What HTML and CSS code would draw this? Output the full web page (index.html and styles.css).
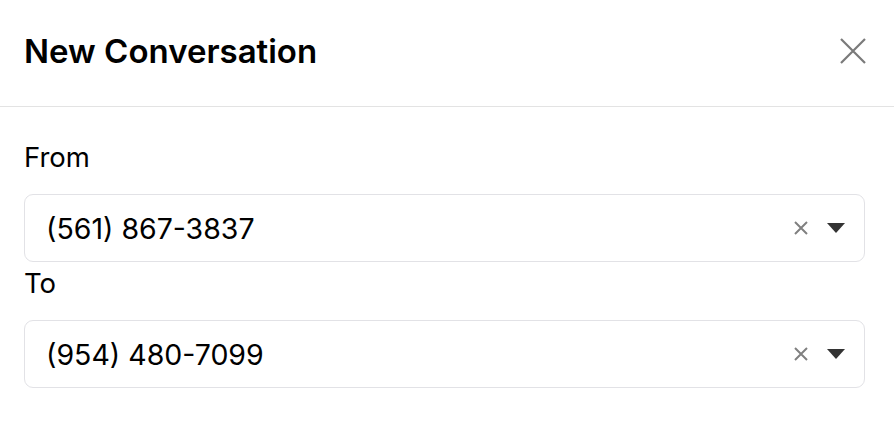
FILE: index.html
```html
<!DOCTYPE html>
<html>
<head>
<meta charset="utf-8">
<link rel="stylesheet" href="styles.css">
</head>
<body>
<div class="modal">
  <div class="header">
    <h1 class="title">New Conversation</h1>
    <button class="close" aria-label="Close">
      <svg width="26" height="26" viewBox="0 0 26 26"><path d="M1 1L25 25M25 1L1 25" stroke="#7a7a7a" stroke-width="2.2" fill="none"/></svg>
    </button>
  </div>
  <div class="body">
    <div class="field">
      <label class="label">From</label>
      <div class="select">
        <span class="value">(561) 867-3837</span>
        <span class="controls">
          <svg class="clear" width="14" height="14" viewBox="0 0 14 14"><path d="M1 1L13 13M13 1L1 13" stroke="#808080" stroke-width="2" fill="none"/></svg>
          <svg class="caret" width="18" height="10" viewBox="0 0 18 10"><path d="M0 0H18L9 10Z" fill="#333"/></svg>
        </span>
      </div>
    </div>
    <div class="field">
      <label class="label">To</label>
      <div class="select">
        <span class="value">(954) 480-7099</span>
        <span class="controls">
          <svg class="clear" width="14" height="14" viewBox="0 0 14 14"><path d="M1 1L13 13M13 1L1 13" stroke="#808080" stroke-width="2" fill="none"/></svg>
          <svg class="caret" width="18" height="10" viewBox="0 0 18 10"><path d="M0 0H18L9 10Z" fill="#333"/></svg>
        </span>
      </div>
    </div>
  </div>
</div>
</body>
</html>
```
FILE: styles.css
```css
* { box-sizing: border-box; }
html, body { margin: 0; padding: 0; background: #fff; }
body { font-family: Inter, "Noto Sans", sans-serif; color: #000; }
.modal { width: 894px; height: 430px; background: #fff; }
.header {
  height: 107px;
  border-bottom: 1px solid #e3e3e3;
  display: flex;
  align-items: center;
  justify-content: space-between;
  padding: 0 28px 4px 24px;
}
.title { margin: 0; font-size: 33px; font-weight: 600; color: #000; }
.close { border: 0; background: none; padding: 0; width: 26px; height: 26px; display: flex; }
.body { padding: 34px 29px 0 24px; }
.field { margin-bottom: 5px; }
.label { display: block; font-size: 27.5px; line-height: 32px; margin-bottom: 21px; color: #000; }
.select {
  height: 68px;
  border: 1px solid #e2e2e6;
  border-radius: 9px;
  display: flex;
  align-items: center;
  justify-content: space-between;
  padding: 0 19px 0 21px;
}
.value { font-size: 28.5px; color: #000; }
.controls { display: flex; align-items: center; gap: 19px; }
.clear { display: block; }
.caret { display: block; }
```
